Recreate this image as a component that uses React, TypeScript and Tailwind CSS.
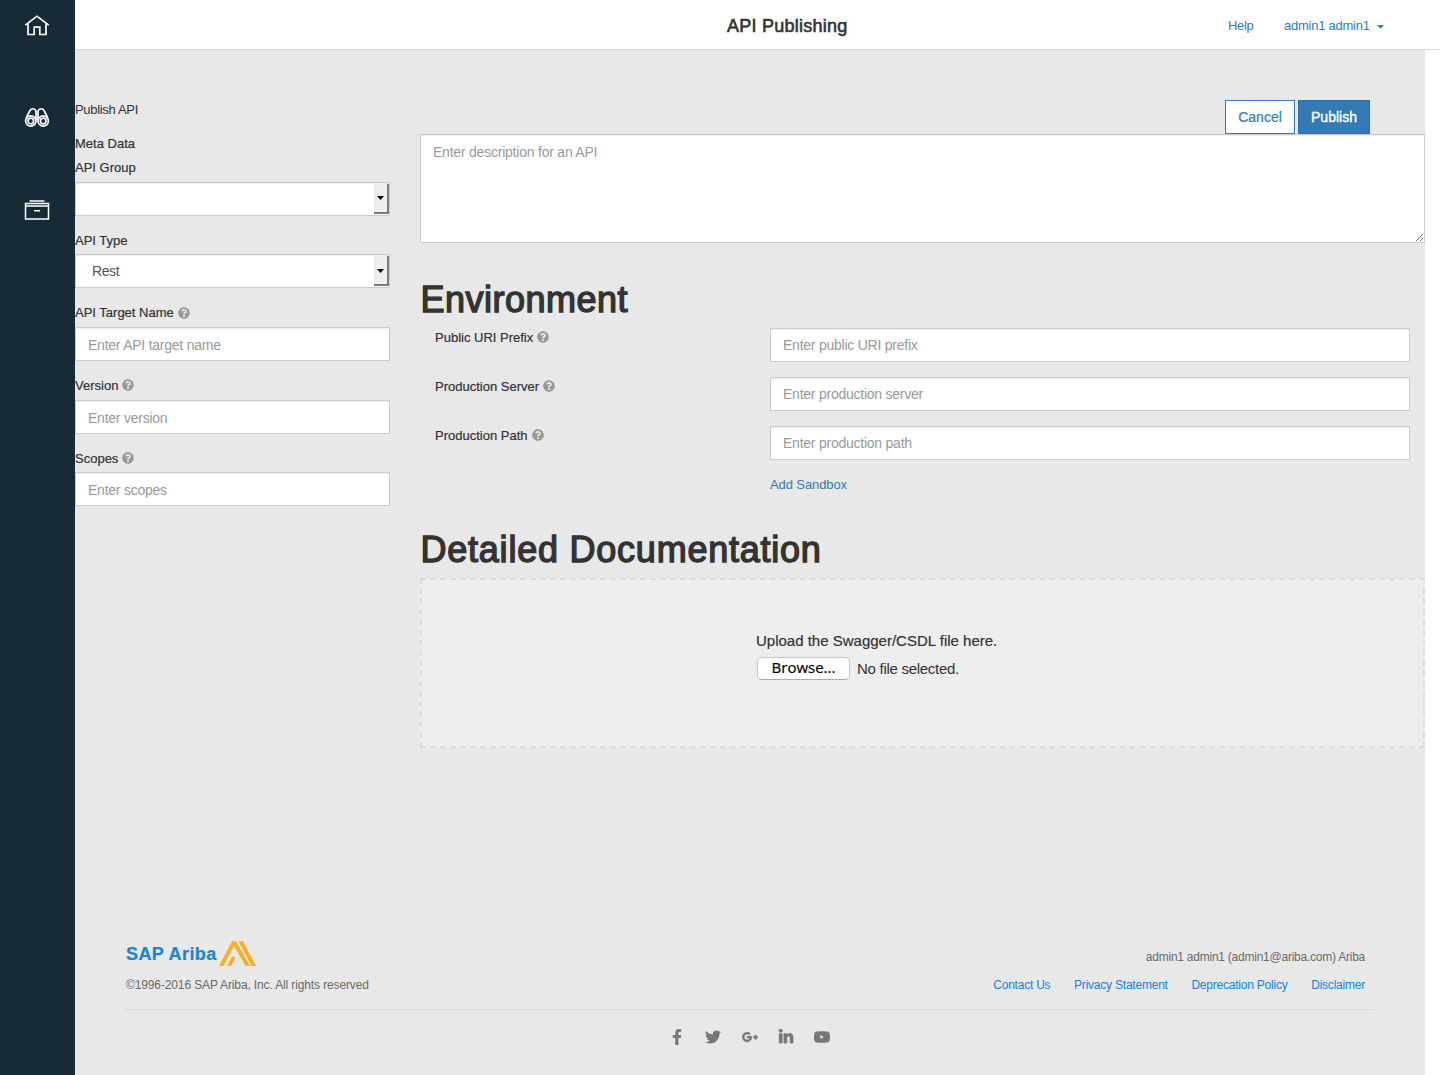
import React from "react";
import { FaFacebookF, FaTwitter, FaGooglePlusG, FaLinkedinIn, FaQuestionCircle } from "react-icons/fa";

const inputCls =
  "block h-[34px] w-full border border-[#ccc] bg-white px-3 text-[14px] tracking-[-0.24px] text-[#555] outline-none placeholder:text-[#999] shadow-[inset_0_1px_1px_rgba(0,0,0,0.075)]";

function Help() {
  return <FaQuestionCircle className="ml-1 size-3 text-[#999]" />;
}

function Label({ text, help }: { text: string; help?: boolean }) {
  return (
    <label className="mb-[5px] flex h-[18.7px] items-center whitespace-nowrap text-[13px] leading-[18.7px] [-webkit-text-stroke:0.2px_#333]">
      <span className="pt-[2px]">{text}</span>
      {help && <Help />}
    </label>
  );
}

function SelectField({ label, value }: { label: string; value: string }) {
  return (
    <div className="mb-[15px]">
      <Label text={label} />
      <div className="flex h-[34px] border border-[#ccc] bg-white pb-px pt-px shadow-[inset_0_1px_1px_rgba(0,0,0,0.075)]">
        <div className="flex-1 pl-4 text-[14px] leading-[31px] tracking-[-0.4px] text-[#555]">{value}</div>
        <div className="flex w-[15px] items-center justify-center border-b-2 border-r-2 border-[#7c7c7c] bg-[#eee]">
          <svg className="mt-px" width="7" height="4" viewBox="0 0 7 4">
            <path d="M0 0h7L3.5 4z" fill="#000" />
          </svg>
        </div>
      </div>
    </div>
  );
}

function TextField({ label, placeholder }: { label: string; placeholder: string }) {
  return (
    <div className="mb-[15px]">
      <Label text={label} help />
      <input className={inputCls + " pt-[2px]"} placeholder={placeholder} />
    </div>
  );
}

function EnvRow({ label, placeholder }: { label: string; placeholder: string }) {
  return (
    <div className="mb-[15px] flex px-[15px]">
      <div className="w-[335px]">
        <Label text={label} help />
      </div>
      <div className="flex-1">
        <input className={inputCls} placeholder={placeholder} />
      </div>
    </div>
  );
}

function Sidebar() {
  return (
    <nav className="flex w-[75px] flex-col items-center bg-[#172b36] pr-px pt-[13px]">
      <svg width="26" height="24" viewBox="0 0 26 24" fill="none" stroke="#fff" strokeWidth="1.7">
        <path d="M1.3 12.2 13 3.2l11.700 9M4 10.500v11h6.200v-7.400h5.600v7.400H22v-11" />
      </svg>
      <svg className="mt-[68px]" width="26" height="24" viewBox="0 0 26 24" fill="none" stroke="#fff" strokeWidth="1.7">
        <circle cx="6.8" cy="16" r="5.200" />
        <circle cx="6.8" cy="16" r="2.800" />
        <circle cx="19.2" cy="16" r="5.200" />
        <circle cx="19.2" cy="16" r="2.800" />
        <path d="M2.200 13 5.600 6.200C7 3 10.800 3 12 6v9M23.800 13l-3.400-6.800C19 3 15.200 3 14 6v9" />
      </svg>
      <svg className="mt-[68px]" width="26" height="24" viewBox="0 0 26 24" fill="none" stroke="#fff" strokeWidth="1.5">
        <path d="M4.500 6.500H1.500v15.500h23V6.500h-3M5.500 4h15M4.500 6.500h17M2 9h3M21 9h3M5 8.900h16M10 13.700h6" />
      </svg>
    </nav>
  );
}

function Footer() {
  return (
    <footer className="mt-[189px] pl-[49px] pr-[50px] text-[12px] text-[#6a6a6a]">
      <div className="flex h-[73px] justify-between border-b border-[#dadada] pl-0.5 pr-[10px]">
        <div>
          <div className="flex h-[32px] items-start">
            <span className="mt-[4px] w-[93px] whitespace-nowrap text-[18px] font-bold leading-[26px] tracking-[0.4px] text-[#1b84d4] [-webkit-text-stroke:0.2px_#1b84d4]">
              SAP Ariba
            </span>
            <svg className="mt-[3px]" width="38" height="27" viewBox="0 0 38 27" fill="#f5b02a">
              <path d="M0 26 13 1.200h4L31 26h-4.500L15 6 4.500 26ZM8 26l5.500-10 2.800 2.200L12.200 26ZM19.500 1.200H24L37 26h-4.500Z" />
            </svg>
          </div>
          <div className="mt-[7px] whitespace-nowrap leading-[18px] tracking-[-0.13px]">
            ©1996-2016 SAP Ariba, Inc. All rights reserved
          </div>
        </div>
        <div className="pt-[11px] text-right">
          <div className="leading-[18px] tracking-[-0.24px]">admin1 admin1 (admin1@ariba.com) Ariba</div>
          <div className="mt-[10px] flex justify-end gap-[23.700px] leading-[18px] tracking-[-0.22px] text-[#0b86e8]">
            <a>Contact Us</a>
            <a>Privacy Statement</a>
            <a>Deprecation Policy</a>
            <a>Disclaimer</a>
          </div>
        </div>
      </div>
      <div className="mt-[19px] flex justify-center gap-[20.2px] text-[#777] [&>svg]:size-4">
        <FaFacebookF />
        <FaTwitter />
        <FaGooglePlusG stroke="currentColor" strokeWidth="24" />
        <FaLinkedinIn stroke="currentColor" strokeWidth="24" />
        <svg viewBox="0 0 16 16" fill="currentColor">
          <path fillRule="evenodd" d="M2.5 2.6Q8 2 13.5 2.6 15.6 2.8 15.8 5q.3 3 0 6-.2 2.2-2.3 2.4-5.5.6-11 0Q.4 13.200.2 11q-.3-3 0-6Q.4 2.800 2.500 2.600ZM6.400 6v4L9.600 8Z" />
        </svg>
      </div>
    </footer>
  );
}

export default function App() {
  return (
    <div className="flex h-[1075px] w-[1440px] overflow-hidden bg-white font-['Liberation_Sans',Arial,sans-serif] text-[13px] text-[#333]">
      <Sidebar />
      <div className="flex flex-1 flex-col">
        <header className="flex h-[50px] items-center border-b border-[#d9d9d9] pt-[2px]">
          <div className="w-[652px]" />
          <h1 className="w-[501px] whitespace-nowrap pt-[2px] text-[18px] tracking-[0.25px] [-webkit-text-stroke:0.6px_#333]">API Publishing</h1>
          <a className="w-[56px] tracking-[-0.3px] text-[#337ab7]">Help</a>
          <a className="flex items-center whitespace-nowrap tracking-[-0.25px] text-[#337ab7]">
            admin1 admin1
            <svg className="ml-[7px] mt-[2px]" width="7" height="4" viewBox="0 0 7 4">
              <path d="M0 0h7L3.5 3.800z" fill="#337ab7" />
            </svg>
          </a>
        </header>
        <main className="w-[1350px] flex-1 bg-[#e8e8e8] pt-[50px]">
          <div className="flex h-[34px] justify-between pr-[55px]">
            <div className="leading-[19px] tracking-[-0.32px]">Publish API</div>
            <div className="flex gap-[3px] text-[14px]">
              <button className="w-[70px] border border-[#337ab7] bg-white text-[#337ab7] [-webkit-text-stroke:0.2px_#337ab7]">Cancel</button>
              <button className="w-[72px] border border-[#2e6da4] bg-[#337ab7] text-white [-webkit-text-stroke:0.4px_#fff]">Publish</button>
            </div>
          </div>
          <div className="flex h-[614px] gap-[30px]">
            <section className="w-[315px]">
              <div className="h-[24px] leading-[19px] [-webkit-text-stroke:0.2px_#333]">Meta Data</div>
              <SelectField label="API Group" value="" />
              <SelectField label="API Type" value="Rest" />
              <TextField label="API Target Name" placeholder="Enter API target name" />
              <TextField label="Version" placeholder="Enter version" />
              <TextField label="Scopes" placeholder="Enter scopes" />
            </section>
            <section className="w-[1005px]">
              <textarea
                className="block h-[109px] w-full border border-[#ccc] bg-white px-3 py-[7px] text-[14px] leading-5 tracking-[-0.22px] shadow-[inset_0_1px_1px_rgba(0,0,0,0.075)] outline-none placeholder:text-[#999]"
                placeholder="Enter description for an API"
              />
              <h2 className="mb-[10px] mt-[36px] h-[39px] pl-[0.5px] text-[36px] leading-[42px] tracking-[0.5px] [-webkit-text-stroke:1.4px_#333]">Environment</h2>
              <EnvRow label="Public URI Prefix" placeholder="Enter public URI prefix" />
              <EnvRow label="Production Server" placeholder="Enter production server" />
              <EnvRow label="Production Path" placeholder="Enter production path" />
              <a className="ml-[350px] block h-[19px] leading-[19px] tracking-[-0.1px] text-[#337ab7]">Add Sandbox</a>
              <h2 className="mb-[9px] mt-[35px] h-[40px] pl-[0.5px] text-[36px] leading-[42px] tracking-[0.77px] [-webkit-text-stroke:1.4px_#333]">
                Detailed Documentation
              </h2>
              <div className="h-[170px] border-2 border-dashed border-[#ddd] bg-[#eee] pl-[334px] pt-[50px] text-[15px]">
                <div className="leading-[22px] [-webkit-text-stroke:0.2px_#333]">Upload the Swagger/CSDL file here.</div>
                <div className="mt-[5px] flex items-center">
                  <button className="ml-px h-[23px] w-[93px] rounded-[5px] border border-[#c4c4c4] border-b-[#aaa] bg-white font-['Open_Sans',sans-serif] text-[15px] leading-[18px] text-black [-webkit-text-stroke:0.2px_#000]">
                    <span className="relative -top-[1.5px]">Browse...</span>
                  </button>
                  <span className="ml-[7px] pt-px tracking-[-0.28px]">No file selected.</span>
                </div>
              </div>
            </section>
          </div>
          <Footer />
        </main>
      </div>
    </div>
  );
}
